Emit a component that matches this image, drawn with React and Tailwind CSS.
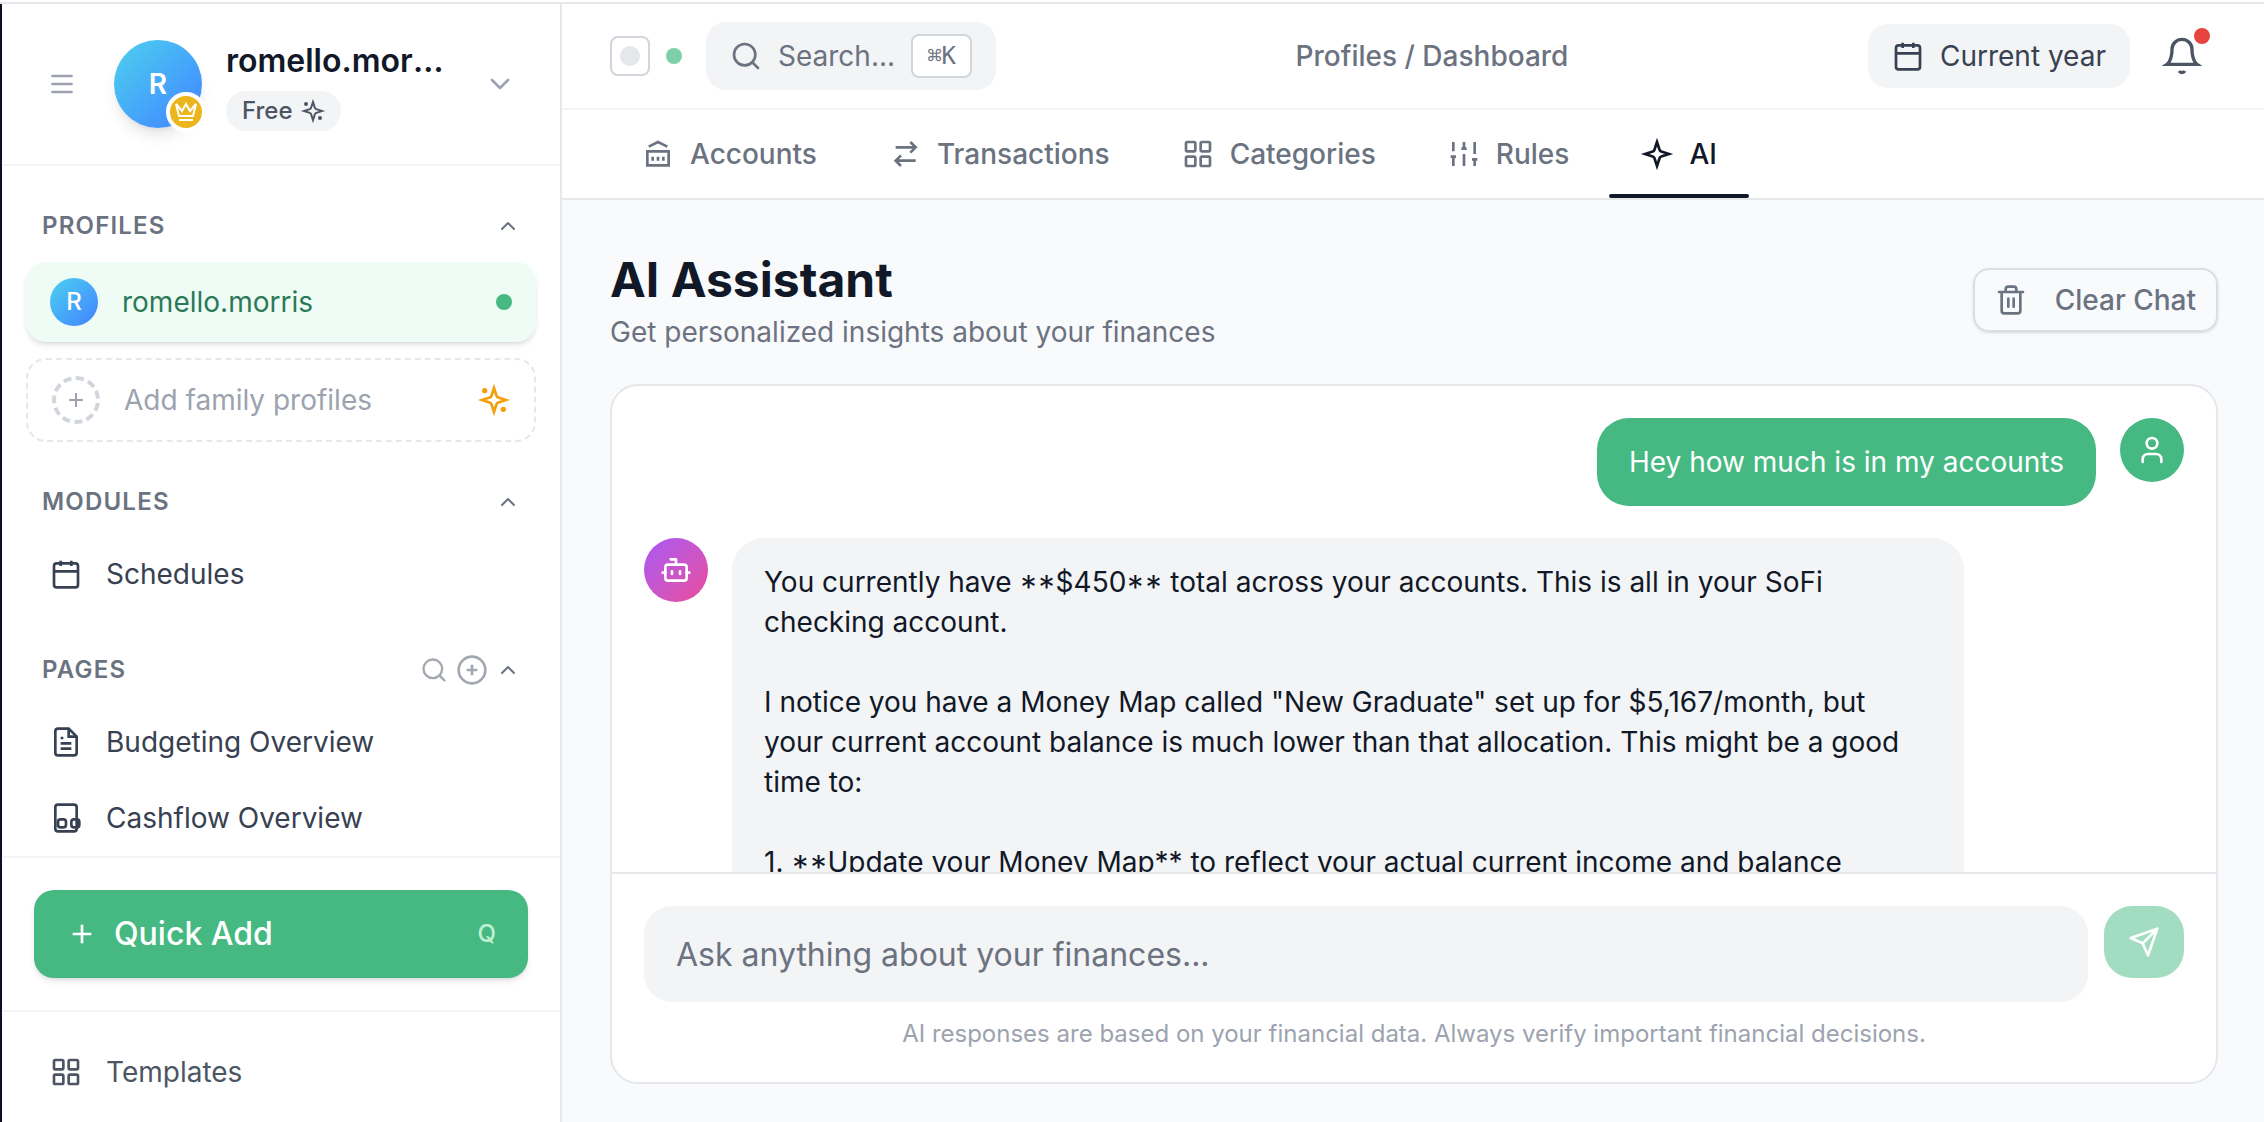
import React from "react";

function Icon({ className = "size-8", sharp = false, width = 2, children }) {
  return (
    <svg
      viewBox="0 0 24 24"
      fill="none"
      stroke="currentColor"
      strokeWidth={width}
      strokeLinecap={sharp ? "butt" : "round"}
      strokeLinejoin={sharp ? "miter" : "round"}
      className={`${className} shrink-0 overflow-visible`}
      aria-hidden="true"
    >
      {children}
    </svg>
  );
}

const STAR =
  "m12 3-1.9 5.8a2 2 0 0 1-1.3 1.3L3 12l5.8 1.9a2 2 0 0 1 1.3 1.3L12 21l1.9-5.8a2 2 0 0 1 1.3-1.3L21 12l-5.8-1.9a2 2 0 0 1-1.3-1.3Z";

const Star = (p) => (
  <Icon sharp {...p}>
    <path d={STAR} />
  </Icon>
);
const Sparkles = (p) => (
  <Icon sharp {...p}>
    <path d={STAR} />
    <circle cx="5" cy="5" r="2" fill="currentColor" stroke="none" />
    <circle cx="19" cy="19" r="2" fill="currentColor" stroke="none" />
  </Icon>
);
const MenuIcon = (p) => (
  <Icon sharp {...p}>
    <path d="M4 6h16M4 12h16M4 18h16" />
  </Icon>
);
const ChevronDown = (p) => (
  <Icon {...p}>
    <path d="m6 9 6 6 6-6" />
  </Icon>
);
const ChevronUp = (p) => (
  <Icon {...p}>
    <path d="m18 15-6-6-6 6" />
  </Icon>
);
const Crown = (p) => (
  <Icon sharp {...p}>
    <path d="M2 4l3 12h14l3-12-6 7-4-7-4 7-6-7zM5 20h14" />
  </Icon>
);
const Plus = (p) => (
  <Icon sharp {...p}>
    <path d="M12 5v14M5 12h14" />
  </Icon>
);
const SearchIcon = (p) => (
  <Icon {...p}>
    <circle cx="11" cy="11" r="8" />
    <path d="m21 21-4.35-4.35" />
  </Icon>
);
const PlusCircle = (p) => (
  <Icon sharp {...p}>
    <circle cx="12" cy="12" r="10" />
    <path d="M12 8v8M8 12h8" />
  </Icon>
);
const Calendar = (p) => (
  <Icon sharp {...p}>
    <rect x="3" y="4" width="18" height="18" rx="2" />
    <path d="M16 2v4M8 2v4M3 10h18" />
  </Icon>
);
const FileText = (p) => (
  <Icon sharp {...p}>
    <path d="M14 2H6a2 2 0 0 0-2 2v16a2 2 0 0 0 2 2h12a2 2 0 0 0 2-2V8z" />
    <path d="M14 2v6h6M16 13H8M16 17H8M10 9H8" />
  </Icon>
);
const Cashflow = (p) => (
  <Icon sharp {...p}>
    <rect x="4" y="2" width="16" height="20" rx="2" />
    <rect x="6" y="13" width="6" height="6" rx="2" />
    <rect x="16" y="13" width="6" height="6" rx="2" />
  </Icon>
);
const Grid = (p) => (
  <Icon {...p}>
    <rect x="3" y="3" width="7" height="7" rx="1" />
    <rect x="14" y="3" width="7" height="7" rx="1" />
    <rect x="3" y="14" width="7" height="7" rx="1" />
    <rect x="14" y="14" width="7" height="7" rx="1" />
  </Icon>
);
const Bank = (p) => (
  <Icon sharp {...p}>
    <path d="m5 6.5 7-3.5 7 3.5M4 10h16v10.5H4zM8 14v3M12 14v3M16 14v3" />
  </Icon>
);
const Transfer = (p) => (
  <Icon sharp {...p}>
    <path d="M5 7h15M16 3l4 4-4 4M20 17H5M9 13l-4 4 4 4" />
  </Icon>
);
const Sliders = (p) => (
  <Icon sharp {...p}>
    <path d="M4 21v-7M4 10V3M12 21v-9M12 8V3M20 21v-5M20 12V3M2 14h4M10 8h4M18 16h4" />
  </Icon>
);
const Bell = (p) => (
  <Icon sharp {...p}>
    <path d="M18 8A6 6 0 0 0 6 8c0 7-3 9-3 9h18s-3-2-3-9M13.73 21a2 2 0 0 1-3.46 0" />
  </Icon>
);
const Trash = (p) => (
  <Icon {...p}>
    <path d="M3 6h18M19 6v14a2 2 0 0 1-2 2H7a2 2 0 0 1-2-2V6m3 0V4a2 2 0 0 1 2-2h4a2 2 0 0 1 2 2v2M10 11v6M14 11v6" />
  </Icon>
);
const Bot = (p) => (
  <Icon {...p}>
    <path d="M12 8V4H8" />
    <rect x="4" y="8" width="16" height="12" rx="2" />
    <path d="M2 14h2M20 14h2M15 13v2M9 13v2" />
  </Icon>
);
const User = (p) => (
  <Icon {...p}>
    <path d="M19 21v-2a4 4 0 0 0-4-4H9a4 4 0 0 0-4 4v2" />
    <circle cx="12" cy="7" r="4" />
  </Icon>
);
const Send = (p) => (
  <Icon {...p}>
    <path d="M22 2 11 13M22 2l-7 20-4-9-9-4z" />
  </Icon>
);

function SectionHeader({ title, children }) {
  return (
    <div className="mb-4 flex h-10 items-center justify-between px-4 text-[#6b7280]">
      <h2 className="text-2xl font-semibold tracking-wider">{title}</h2>
      <div className="flex items-center gap-2">
        {children}
        <button type="button" aria-label={`Collapse ${title.toLowerCase()}`}>
          <ChevronUp className="size-6" />
        </button>
      </div>
    </div>
  );
}

function NavItem({ icon: Glyph, label, tone = "text-[#374151]" }) {
  return (
    <a href="#" className={`flex h-[72px] items-center gap-6 px-6 text-[28px] ${tone}`}>
      <Glyph />
      {label}
    </a>
  );
}

function Sidebar() {
  return (
    <aside className="flex w-[562px] shrink-0 flex-col border-r-2 border-l-2 border-r-gray-200 border-l-[#0b1120] bg-white">
      <div className="flex h-[162px] shrink-0 items-center border-b-2 border-gray-100 px-8">
        <button type="button" aria-label="Toggle menu" className="p-3 text-[#9ca3af]">
          <MenuIcon />
        </button>
        <div className="relative ml-6 flex size-22 shrink-0 items-center justify-center rounded-full bg-linear-to-br from-[#4fd1ee] to-[#4480ff] text-[28px] font-semibold text-white shadow-lg">
          R
          <span className="absolute -right-1 -bottom-1 flex size-10 items-center justify-center rounded-full border-4 border-white bg-[#ecb51c]">
            <Crown className="size-6" />
          </span>
        </div>
        <div className="ml-6 w-[224px] min-w-0">
          <p className="truncate text-[32px] leading-[48px] font-semibold text-[#111827]">romello.morris</p>
          <span className="mt-1.5 inline-flex h-10 items-center gap-2 rounded-full bg-gray-100 px-4 align-top text-2xl font-medium text-[#4b5563]">
            Free
            <Sparkles className="size-6" />
          </span>
        </div>
        <button type="button" aria-label="Switch account" className="ml-auto p-3 text-[#9ca3af]">
          <ChevronDown />
        </button>
      </div>

      <nav className="min-h-0 flex-1 overflow-hidden px-6 pt-10">
        <SectionHeader title="PROFILES" />
        <a
          href="#"
          className="flex h-20 items-center gap-6 rounded-[20px] bg-[#effcf6] px-6 text-[28px] text-[#2b7a57] shadow-md"
        >
          <span className="flex size-12 items-center justify-center rounded-full bg-linear-to-br from-[#4fd1ee] to-[#4480ff] text-2xl font-medium text-white">
            R
          </span>
          <span className="flex-1">romello.morris</span>
          <span className="size-4 rounded-full bg-[#46b983]" />
        </a>
        <button
          type="button"
          className="mt-4 flex h-[84px] w-full items-center gap-6 rounded-[20px] border-2 border-dashed border-gray-200 px-6 text-left text-[28px] text-[#9ca3af]"
        >
          <span className="flex size-12 items-center justify-center rounded-full border-4 border-dashed border-gray-300">
            <Plus className="size-6" />
          </span>
          <span className="flex-1">Add family profiles</span>
          <Sparkles className="size-8 text-[#f59e0b]" />
        </button>

        <div className="mt-10">
          <SectionHeader title="MODULES" />
          <NavItem icon={Calendar} label="Schedules" />
        </div>

        <div className="mt-10">
          <SectionHeader title="PAGES">
            <button type="button" aria-label="Search pages" className="text-[#a3a7b0]">
              <SearchIcon className="size-7" />
            </button>
            <button type="button" aria-label="Add page" className="text-[#a3a7b0]">
              <PlusCircle />
            </button>
          </SectionHeader>
          <div className="flex flex-col gap-1">
            <NavItem icon={FileText} label="Budgeting Overview" />
            <NavItem icon={Cashflow} label="Cashflow Overview" />
          </div>
        </div>
      </nav>

      <div className="border-t-2 border-gray-100 p-8">
        <button
          type="button"
          className="flex h-22 w-full items-center gap-4 rounded-[20px] bg-[#46b983] px-8 text-[32px] font-medium text-white shadow-md"
        >
          <Plus />
          Quick Add
          <span className="ml-auto text-2xl font-medium text-[#bdf0d3]">Q</span>
        </button>
      </div>
      <div className="border-t-2 border-gray-100 px-6 pt-6 pb-3.5">
        <NavItem icon={Grid} label="Templates" tone="text-[#4b5563]" />
      </div>
    </aside>
  );
}

const TABS = [
  { label: "Accounts", icon: Bank },
  { label: "Transactions", icon: Transfer },
  { label: "Categories", icon: Grid },
  { label: "Rules", icon: Sliders },
  { label: "AI", icon: Star, active: true },
];

function TopBar() {
  return (
    <header className="flex h-[106px] shrink-0 items-center justify-between border-b-2 border-gray-100 bg-white pr-[46px] pl-12 text-[28px]">
      <div className="flex items-center">
        <button
          type="button"
          aria-label="Toggle panel"
          className="flex size-10 items-center justify-center rounded-lg border-2 border-gray-300"
        >
          <span className="size-5 rounded-full bg-gray-200" />
        </button>
        <span className="ml-4 size-4 rounded-full bg-[#7dcfa8]" />
        <button
          type="button"
          className="ml-6 flex h-[68px] items-center gap-4 rounded-[20px] bg-gray-100 px-6 text-[#6b7280]"
        >
          <SearchIcon />
          Search...
          <kbd className="flex h-11 items-center rounded-lg border-2 border-gray-300 bg-white px-3.5 font-['DejaVu_Sans_Mono',monospace] text-2xl">
            ⌘K
          </kbd>
        </button>
      </div>
      <p className="font-medium text-[#6b7280]">Profiles / Dashboard</p>
      <div className="flex items-center gap-4">
        <button
          type="button"
          className="flex h-16 items-center gap-4 rounded-[20px] bg-gray-100 px-6 text-[#374151]"
        >
          <Calendar />
          Current year
        </button>
        <button type="button" aria-label="Notifications" className="relative p-4 text-[#4b5563]">
          <Bell className="size-10" />
          <span className="absolute top-2 right-2 size-4 rounded-full bg-[#e8443f]" />
        </button>
      </div>
    </header>
  );
}

function Tabs() {
  return (
    <nav className="flex h-[90px] shrink-0 gap-2 border-b-2 border-gray-200 bg-white pr-[46px] pl-12">
      {TABS.map(({ label, icon: Glyph, active }) => (
        <a
          key={label}
          href="#"
          aria-current={active ? "page" : undefined}
          className={`relative flex items-center gap-4 px-8 text-[28px] font-medium ${active ? "text-[#111827]" : "text-[#6b7280]"}`}
        >
          <Glyph />
          {label}
          {active && <span className="absolute inset-x-0 bottom-0 h-1 rounded-full bg-[#111827]" />}
        </a>
      ))}
    </nav>
  );
}

// Uses Inter's case-sensitive forms, so that asterisks sit level with capitals and figures.
function Caps({ children }) {
  return <span className="[font-feature-settings:'case']">{children}</span>;
}

function Chat() {
  return (
    <section className="flex min-h-0 flex-1 flex-col overflow-hidden rounded-[28px] border-2 border-gray-200 bg-white">
      <div className="flex min-h-0 flex-1 flex-col gap-8 overflow-hidden p-8 text-[28px] leading-10">
        <div className="flex justify-end gap-6">
          <p className="max-w-[80%] rounded-[32px] bg-[#46b983] px-8 py-6 text-white">
            Hey how much is in my accounts
          </p>
          <span className="flex size-16 shrink-0 items-center justify-center rounded-full bg-[#46b983] text-white">
            <User />
          </span>
        </div>
        <div className="flex gap-6">
          <span className="flex size-16 shrink-0 items-center justify-center rounded-full bg-linear-to-br from-[#a855f7] to-[#ec4899] text-white">
            <Bot />
          </span>
          <div className="flex max-w-[80%] flex-col gap-10 rounded-[32px] bg-gray-100 px-8 py-6 text-[#111827]">
            <p>
              You currently have <Caps>**$450**</Caps> total across your accounts. This is all in your SoFi
              checking account.
            </p>
            <p>
              I notice you have a Money Map called "New Graduate" set up for $5,167/month, but your current
              account balance is much lower than that allocation. This might be a good time to:
            </p>
            <p>
              1. <Caps>**U</Caps>pdate your Money Map** to reflect your actual current income and balance
            </p>
          </div>
        </div>
      </div>
      <form className="border-t-2 border-gray-200 p-8" onSubmit={(e) => e.preventDefault()}>
        <div className="flex items-start gap-4">
          <input
            type="text"
            aria-label="Message"
            placeholder="Ask anything about your finances..."
            className="h-24 min-w-0 flex-1 rounded-[28px] bg-gray-100 px-8 text-[32px] text-[#111827] outline-none placeholder:text-[#6b7280]"
          />
          <button
            type="submit"
            aria-label="Send"
            className="flex h-18 w-20 items-center justify-center rounded-[28px] bg-[#a2dcc1] text-white"
          >
            <Send />
          </button>
        </div>
        <p className="mt-4 text-center text-2xl leading-8 text-[#9ca3af]">
          AI responses are based on your financial data. Always verify important financial decisions.
        </p>
      </form>
    </section>
  );
}

export default function App() {
  return (
    <div className="flex h-screen flex-col overflow-hidden bg-white font-['Inter',sans-serif]">
      <div className="h-1 shrink-0 border-b-2 border-gray-200" />
      <div className="flex min-h-0 flex-1">
        <Sidebar />
        <div className="flex min-w-0 flex-1 flex-col">
          <TopBar />
          <Tabs />
          <main className="flex min-h-0 flex-1 flex-col bg-[#f9fafc] pt-12 pr-[46px] pb-[38px] pl-12">
            <div className="mb-8 flex items-center justify-between">
              <div>
                <h1 className="text-5xl leading-[64px] font-bold text-[#111827]">AI Assistant</h1>
                <p className="text-[28px] leading-10 text-[#6b7280]">
                  Get personalized insights about your finances
                </p>
              </div>
              <button
                type="button"
                className="flex h-16 items-center gap-7 rounded-2xl border-2 border-[#dcdde0] px-5 text-[28px] font-medium text-[#6b7280] shadow-sm"
              >
                <Trash />
                Clear Chat
              </button>
            </div>
            <Chat />
          </main>
        </div>
      </div>
    </div>
  );
}
